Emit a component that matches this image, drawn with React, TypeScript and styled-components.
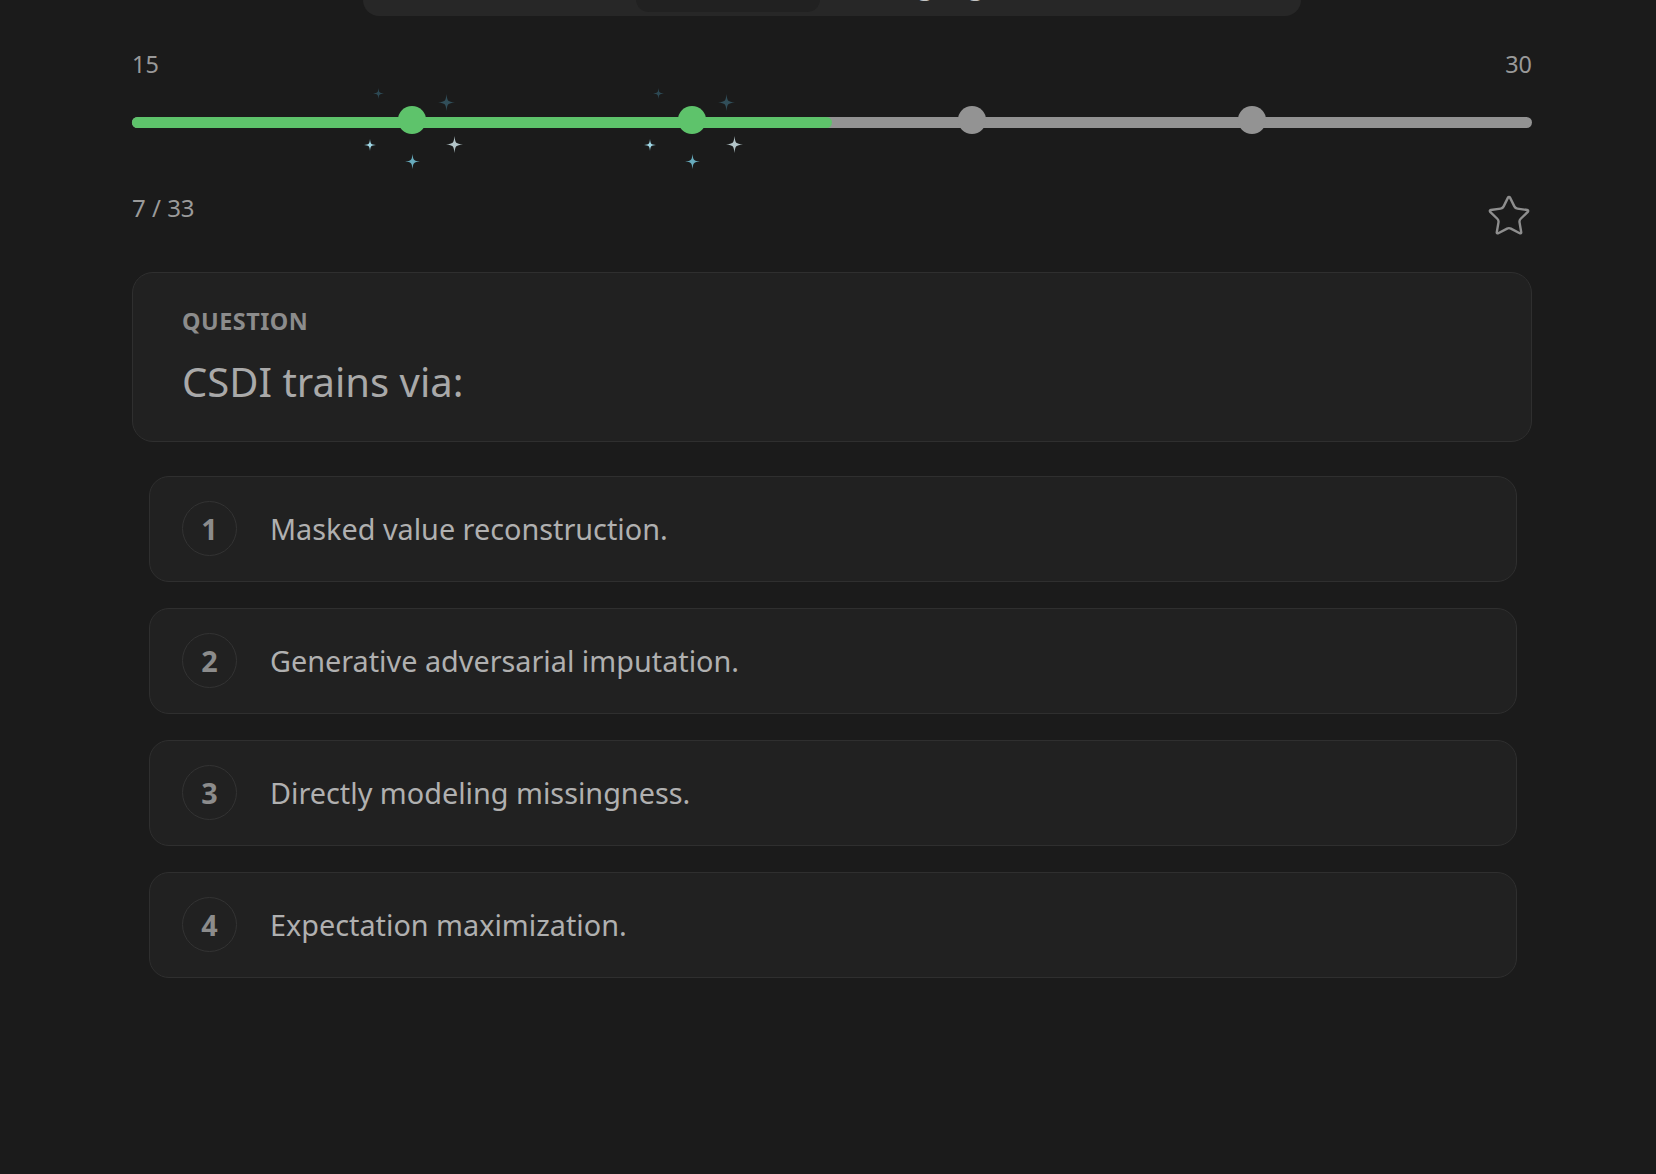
import styled, { createGlobalStyle } from "styled-components";
import { Star } from "lucide-react";

type TSparkle = { dx: number; dy: number; size: number; color: string };

const SPARKLES: TSparkle[] = [
  { dx: -34, dy: -26, size: 11, color: "#2d4954" },
  { dx: 34, dy: -17, size: 17, color: "#314e59" },
  { dx: -42, dy: 25, size: 12, color: "#9fd6e4" },
  { dx: 42, dy: 25, size: 17, color: "#b3c4c8" },
  { dx: 0, dy: 42, size: 15, color: "#67abbd" },
];

const STEPS = [20, 40, 60, 80];
const PROGRESS = 50;

const OPTIONS = [
  "Masked value reconstruction.",
  "Generative adversarial imputation.",
  "Directly modeling missingness.",
  "Expectation maximization.",
];

const TABS = [
  { label: "Learn", width: 269 },
  { label: "Quiz", width: 184 },
  { label: "Highlights", width: 275 },
  { label: "Notes", width: 201 },
];

const SparkleIcon = ({ dx, dy, size, color }: TSparkle) => (
  <SparkleStyle $dx={dx} $dy={dy} $size={size} viewBox="-10 -10 20 20">
    <path
      d="M0 -10 C1 -1.5 1.5 -1 10 0 C1.5 1 1 1.5 0 10 C-1 1.5 -1.5 1 -10 0 C-1.5 -1 -1 -1.5 0 -10Z"
      fill={color}
    />
  </SparkleStyle>
);

const App = () => {
  return (
    <>
      <GlobalStyle />
      <MainStyle>
        <TopBarStyle>
          {TABS.map((tab) => (
            <TabStyle
              key={tab.label}
              $width={tab.width}
              $active={tab.label === "Quiz"}
            >
              {tab.label}
            </TabStyle>
          ))}
        </TopBarStyle>

        <RangeLabelsStyle>
          <span>15</span>
          <span>30</span>
        </RangeLabelsStyle>

        <TrackStyle>
          <FillStyle $pct={PROGRESS} />
          {STEPS.map((step) => {
            const done = step <= PROGRESS;
            return (
              <DotStyle key={step} $pct={step} $done={done}>
                {done &&
                  SPARKLES.map((s, i) => <SparkleIcon key={i} {...s} />)}
              </DotStyle>
            );
          })}
        </TrackStyle>

        <MetaRowStyle>
          <CounterStyle>7 / 33</CounterStyle>
          <StarButtonStyle>
            <Star size={46} strokeWidth={1.25} color="#8e8e8e" />
          </StarButtonStyle>
        </MetaRowStyle>

        <QuestionCardStyle>
          <QuestionLabelStyle>QUESTION</QuestionLabelStyle>
          <QuestionTextStyle>CSDI trains via:</QuestionTextStyle>
        </QuestionCardStyle>

        <OptionListStyle>
          {OPTIONS.map((text, i) => (
            <OptionStyle key={text}>
              <OptionNumberStyle>{i + 1}</OptionNumberStyle>
              <OptionTextStyle>{text}</OptionTextStyle>
            </OptionStyle>
          ))}
        </OptionListStyle>
      </MainStyle>
    </>
  );
};

export default App;

const GlobalStyle = createGlobalStyle`
  html, body {
    margin: 0;
    padding: 0;
    background: #1b1b1b;
  }
  body {
    font-family: "Noto Sans", "Open Sans", sans-serif;
    color: #a9a9a9;
    min-height: 1174px;
    overflow: hidden;
  }
`;

const MainStyle = styled.main`
  width: 1400px;
  margin-left: 132px;
  display: flex;
  flex-direction: column;
`;

const TopBarStyle = styled.nav`
  height: 76px;
  margin: -60px 231px 0;
  padding: 4px;
  box-sizing: border-box;
  display: flex;
  background: #272727;
  border-radius: 0 0 16px 16px;
  overflow: hidden;
`;

const TabStyle = styled.div<{ $width: number; $active: boolean }>`
  width: ${({ $width }) => $width}px;
  flex-shrink: 0;
  display: flex;
  justify-content: center;
  align-items: flex-end;
  padding-bottom: 14px;
  box-sizing: border-box;
  border-radius: 13px;
  font-size: 28.8px;
  line-height: 1;
  font-weight: ${({ $active }) => ($active ? 600 : 400)};
  color: ${({ $active }) => ($active ? "#9a9a9a" : "#c4c4c4")};
  background: ${({ $active }) => ($active ? "#212121" : "transparent")};
`;

const RangeLabelsStyle = styled.div`
  margin-top: 32px;
  display: flex;
  justify-content: space-between;
  font-size: 23.4px;
  color: #999999;
`;

const TrackStyle = styled.div`
  position: relative;
  margin-top: 37px;
  height: 11px;
  border-radius: 6px;
  background: #939393;
`;

const FillStyle = styled.div<{ $pct: number }>`
  width: ${({ $pct }) => $pct}%;
  height: 100%;
  border-radius: 6px;
  background: #5ec36b;
`;

const DotStyle = styled.div<{ $pct: number; $done: boolean }>`
  position: absolute;
  left: ${({ $pct }) => $pct}%;
  top: -11.5px;
  width: 28.8px;
  height: 28.8px;
  margin-left: -14.4px;
  border-radius: 50%;
  background: ${({ $done }) => ($done ? "#5ec36b" : "#939393")};
`;

const SparkleStyle = styled.svg<{ $dx: number; $dy: number; $size: number }>`
  position: absolute;
  width: ${({ $size }) => $size}px;
  height: ${({ $size }) => $size}px;
  left: ${({ $dx, $size }) => 14.4 + $dx - $size / 2}px;
  top: ${({ $dy, $size }) => 14.4 + $dy - $size / 2}px;
  pointer-events: none;
`;

const MetaRowStyle = styled.div`
  margin-top: 63px;
  display: flex;
  justify-content: space-between;
  align-items: flex-start;
`;

const CounterStyle = styled.span`
  font-size: 24px;
  color: #9a9a9a;
`;

const StarButtonStyle = styled.button`
  margin-top: 1.5px;
  padding: 0;
  border: none;
  background: none;
  width: 46px;
  height: 46px;
  display: flex;
  cursor: pointer;
`;

const QuestionCardStyle = styled.section`
  margin-top: 33px;
  padding: 32px 50px 32px 49px;
  border: 1px solid #2f2f2f;
  border-radius: 21px;
  background: #212121;
  display: flex;
  flex-direction: column;
  gap: 17px;
`;

const QuestionLabelStyle = styled.span`
  font-size: 23.4px;
  font-weight: 700;
  letter-spacing: 0.5px;
  color: #8c8c8c;
`;

const QuestionTextStyle = styled.h1`
  margin: 0;
  font-size: 40px;
  font-weight: 400;
  line-height: normal;
  color: #a9a9a9;
`;

const OptionListStyle = styled.div`
  margin: 34px 15px 0 17px;
  display: flex;
  flex-direction: column;
  gap: 26px;
`;

const OptionStyle = styled.div`
  height: 106px;
  box-sizing: border-box;
  padding: 0 32px;
  display: flex;
  align-items: center;
  gap: 33px;
  border: 1px solid #2f2f2f;
  border-radius: 20px;
  background: #212121;
  cursor: pointer;
`;

const OptionNumberStyle = styled.span`
  width: 55px;
  height: 55px;
  box-sizing: border-box;
  flex-shrink: 0;
  display: flex;
  align-items: center;
  justify-content: center;
  border: 1.5px solid #333333;
  border-radius: 50%;
  font-size: 28.8px;
  font-weight: 700;
  color: #8c8c8c;
`;

const OptionTextStyle = styled.span`
  font-size: 28.8px;
  color: #b0b0b0;
`;
